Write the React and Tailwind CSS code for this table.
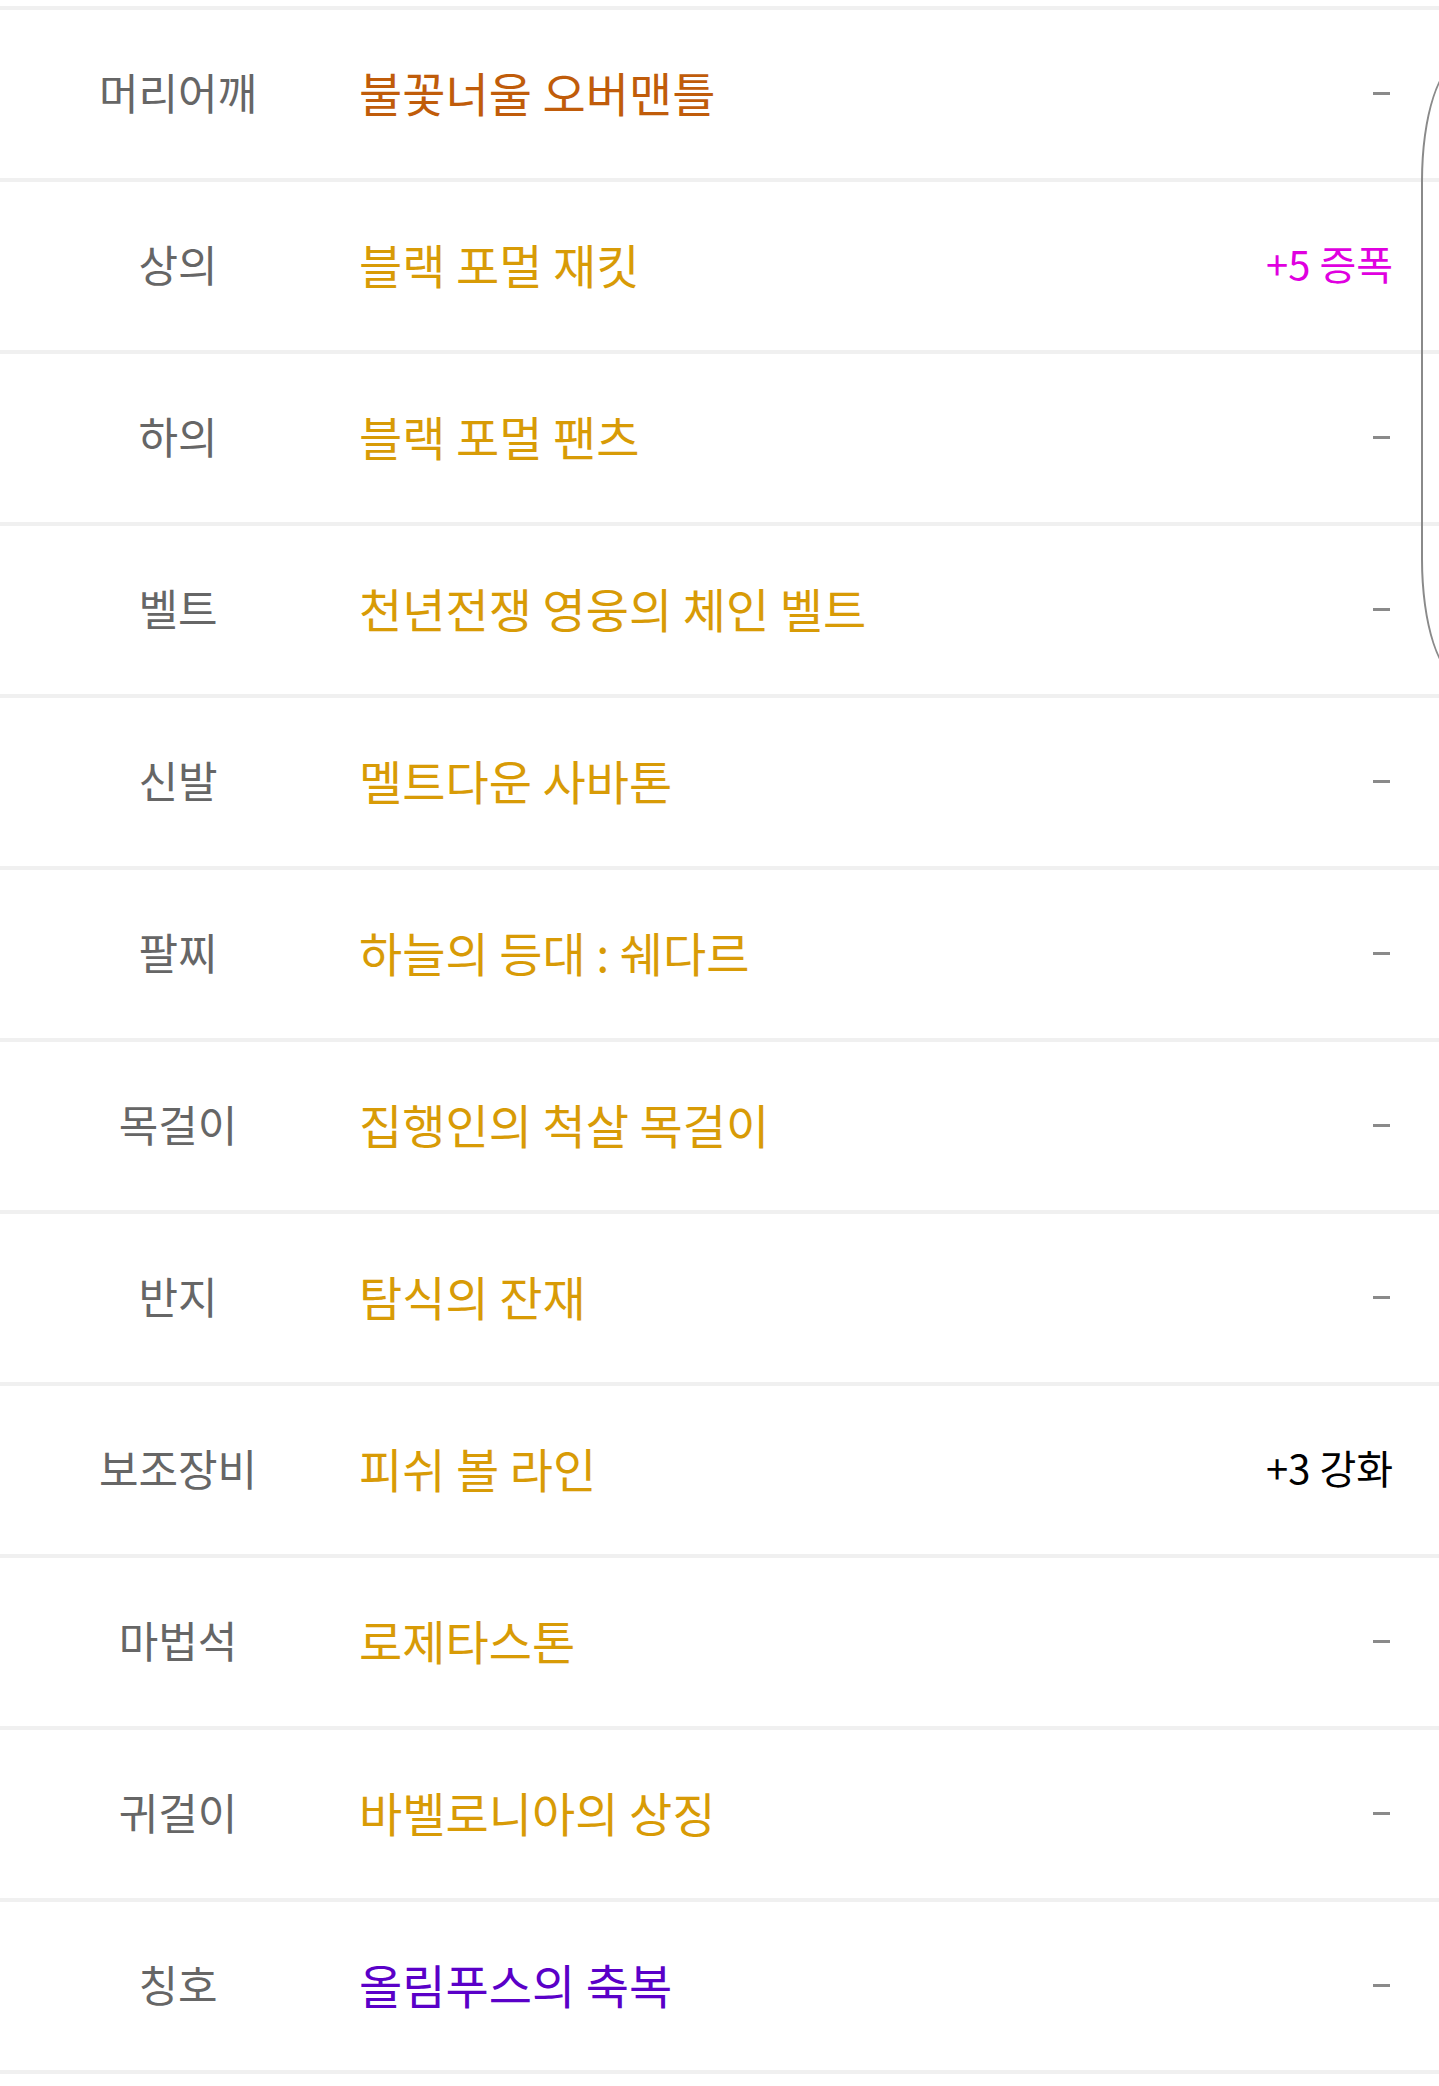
import React from 'react';

const ITEMS = [
  { slot: '머리어깨', name: '불꽃너울 오버맨틀', color: 'text-[#c05c0a]', extra: null },
  { slot: '상의', name: '블랙 포멀 재킷', color: 'text-[#d89b06]', extra: { text: '+5 증폭', color: 'text-[#e000e0]' } },
  { slot: '하의', name: '블랙 포멀 팬츠', color: 'text-[#d89b06]', extra: null },
  { slot: '벨트', name: '천년전쟁 영웅의 체인 벨트', color: 'text-[#d89b06]', extra: null },
  { slot: '신발', name: '멜트다운 사바톤', color: 'text-[#d89b06]', extra: null },
  { slot: '팔찌', name: '하늘의 등대 : 쉐다르', color: 'text-[#d89b06]', extra: null },
  { slot: '목걸이', name: '집행인의 척살 목걸이', color: 'text-[#d89b06]', extra: null },
  { slot: '반지', name: '탐식의 잔재', color: 'text-[#d89b06]', extra: null },
  { slot: '보조장비', name: '피쉬 볼 라인', color: 'text-[#d89b06]', extra: { text: '+3 강화', color: 'text-black' } },
  { slot: '마법석', name: '로제타스톤', color: 'text-[#d89b06]', extra: null },
  { slot: '귀걸이', name: '바벨로니아의 상징', color: 'text-[#d89b06]', extra: null },
  { slot: '칭호', name: '올림푸스의 축복', color: 'text-[#5a00c8]', extra: null },
];

const Row = ({ item, last }) => (
  <div className={`flex items-center h-[172px] pb-[6px] border-t-4 border-[#f0f0f0] ${last ? 'border-b-4 h-[176px]' : ''}`}>
    <div className="w-[359px] pr-[3px] text-center text-[43px] text-[#666666]">{item.slot}</div>
    <div className={`text-[47px] ${item.color}`}>{item.name}</div>
    <div className="ml-auto">
      {item.extra
        ? <span className={`block pr-[46px] text-[40px] ${item.extra.color}`}>{item.extra.text}</span>
        : <span className="block mt-[5px] mr-[49px] w-[17px] h-[3px] bg-[#8a8a8a]" />}
    </div>
  </div>
);

export default function App() {
  return (
    <div className="relative overflow-hidden bg-white min-h-[2086px] pt-[6px] leading-none" style={{ fontFamily: '"Noto Sans CJK KR", "Noto Sans", sans-serif' }}>
      {ITEMS.map((item, i) => (
        <Row key={item.slot} item={item} last={i === ITEMS.length - 1} />
      ))}
      <div className="absolute left-[1421px] top-[61px] w-[120px] h-[618px] rounded-[40px_/_120px] border-2 border-[#8a8a8a]" />
    </div>
  );
}
